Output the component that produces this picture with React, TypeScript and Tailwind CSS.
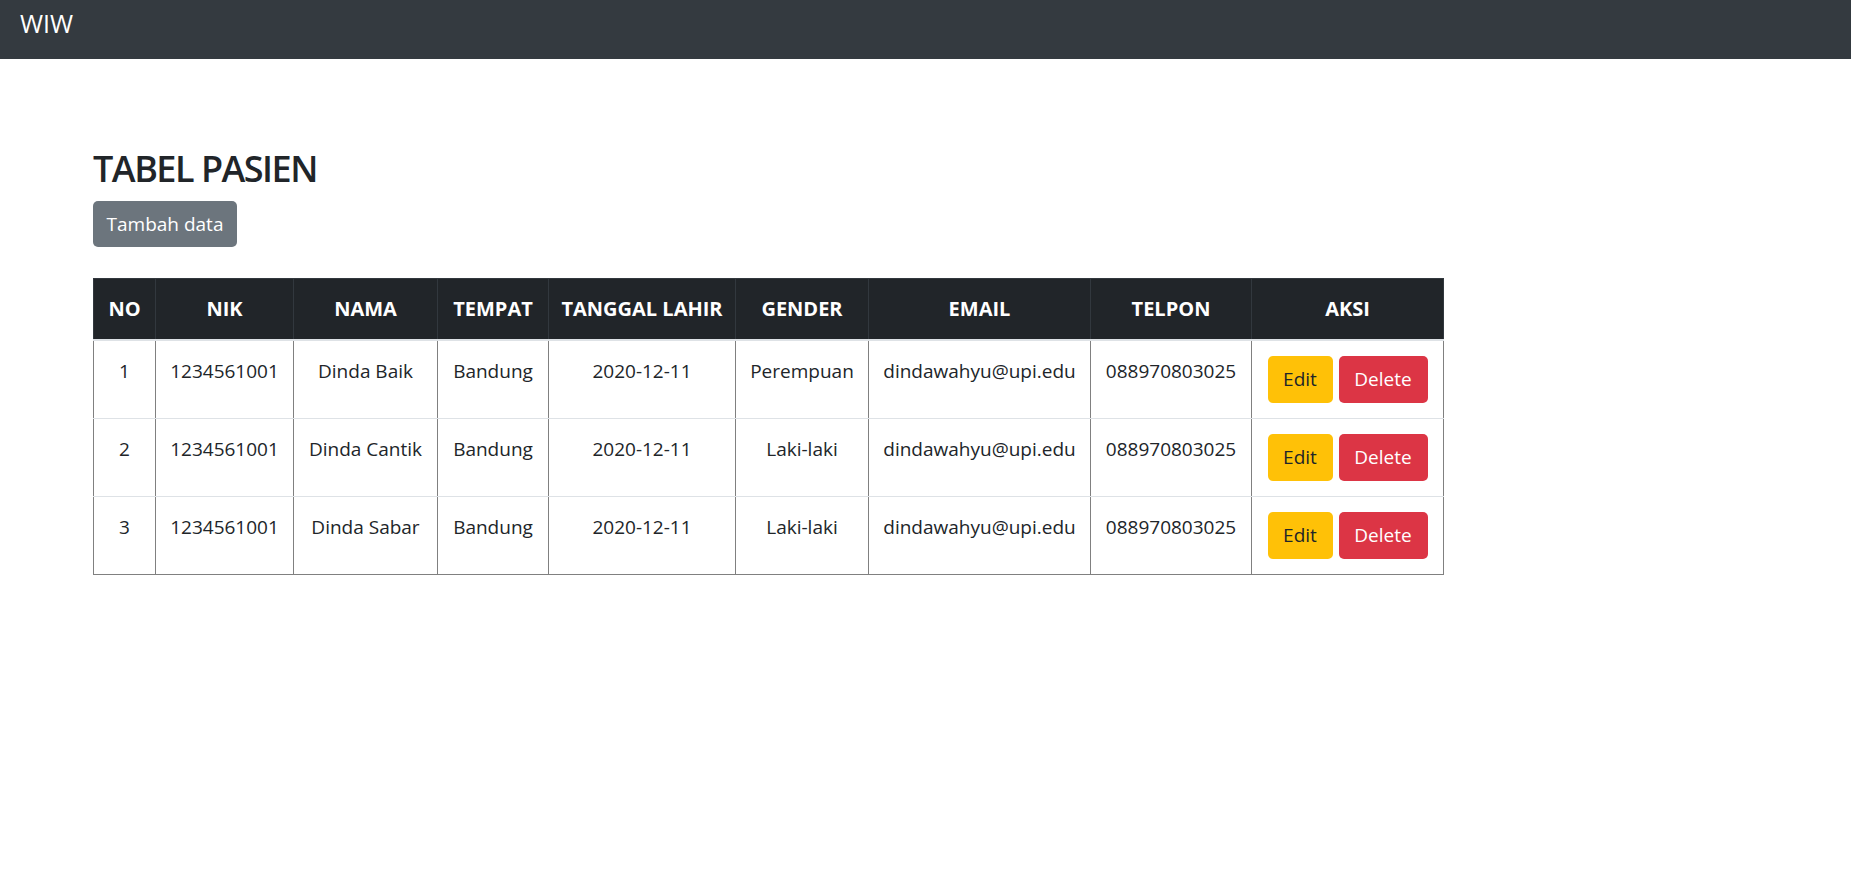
import React from 'react';

type Pasien = {
  no: number;
  nik: string;
  nama: string;
  tempat: string;
  tanggal: string;
  gender: string;
  email: string;
  telpon: string;
};

const pasien: Pasien[] = [
  { no: 1, nik: '1234561001', nama: 'Dinda Baik', tempat: 'Bandung', tanggal: '2020-12-11', gender: 'Perempuan', email: 'dindawahyu@upi.edu', telpon: '088970803025' },
  { no: 2, nik: '1234561001', nama: 'Dinda Cantik', tempat: 'Bandung', tanggal: '2020-12-11', gender: 'Laki-laki', email: 'dindawahyu@upi.edu', telpon: '088970803025' },
  { no: 3, nik: '1234561001', nama: 'Dinda Sabar', tempat: 'Bandung', tanggal: '2020-12-11', gender: 'Laki-laki', email: 'dindawahyu@upi.edu', telpon: '088970803025' },
];

const columns = [
  { label: 'NO', width: 'w-[62px]' },
  { label: 'NIK', width: 'w-[138px]' },
  { label: 'NAMA', width: 'w-[144px]' },
  { label: 'TEMPAT', width: 'w-[111px]' },
  { label: 'TANGGAL LAHIR', width: 'w-[187px]' },
  { label: 'GENDER', width: 'w-[133px]' },
  { label: 'EMAIL', width: 'w-[222px]' },
  { label: 'TELPON', width: 'w-[161px]' },
  { label: 'AKSI', width: 'w-[192px]' },
];

export default function App() {
  const td = 'border-x border-x-[#808080] border-y border-y-[#dee2e6] px-0 pt-[15px] pb-[15px] align-top text-center whitespace-nowrap';

  return (
    <div className="min-h-screen bg-white text-[#212529] font-['Open_Sans','Noto_Sans',sans-serif]">
      <nav className="h-[59px] bg-[#343a40] pl-5 pt-[5px]">
        <span className="text-[25px] leading-[1.5] text-white">WIW</span>
      </nav>

      <main className="pl-[93px] pt-[88px]">
        <h2 className="text-[36px] leading-[1.2] font-semibold tracking-[-1.5px] mb-[11px]">TABEL PASIEN</h2>
        <button className="h-[46px] w-[144px] rounded-[5px] bg-[#6c757d] text-[19px] text-white">
          Tambah data
        </button>

        <table className="mt-[31px] w-[1350px] table-fixed border-collapse border border-[#808080] text-[19px] leading-[30px]">
          <colgroup>
            {columns.map((c) => (
              <col key={c.label} className={c.width} />
            ))}
          </colgroup>
          <thead>
            <tr className="h-[61px]">
              {columns.map((c) => (
                <th
                  key={c.label}
                  className="border border-[#32383e] border-b-2 border-b-[#dee2e6] bg-[#212529] px-0 align-middle text-center text-[20px] font-bold text-white whitespace-nowrap"
                >
                  {c.label}
                </th>
              ))}
            </tr>
          </thead>
          <tbody>
            {pasien.map((p, i) => (
              <tr key={p.no} className={`h-[78px] ${i === pasien.length - 1 ? '[&>td]:border-b-[#808080]' : ''}`}>
                <td className={td}>{p.no}</td>
                <td className={td}>{p.nik}</td>
                <td className={td}>{p.nama}</td>
                <td className={td}>{p.tempat}</td>
                <td className={td}>{p.tanggal}</td>
                <td className={td}>{p.gender}</td>
                <td className={td}>{p.email}</td>
                <td className={td}>{p.telpon}</td>
                <td className={td}>
                  <div className="flex justify-center gap-[6px]">
                    <button className="h-[47px] w-[65px] rounded-[5px] bg-[#ffc107] text-[#212529]">Edit</button>
                    <button className="h-[47px] w-[89px] rounded-[5px] bg-[#dc3545] text-white">Delete</button>
                  </div>
                </td>
              </tr>
            ))}
          </tbody>
        </table>
      </main>
    </div>
  );
}
